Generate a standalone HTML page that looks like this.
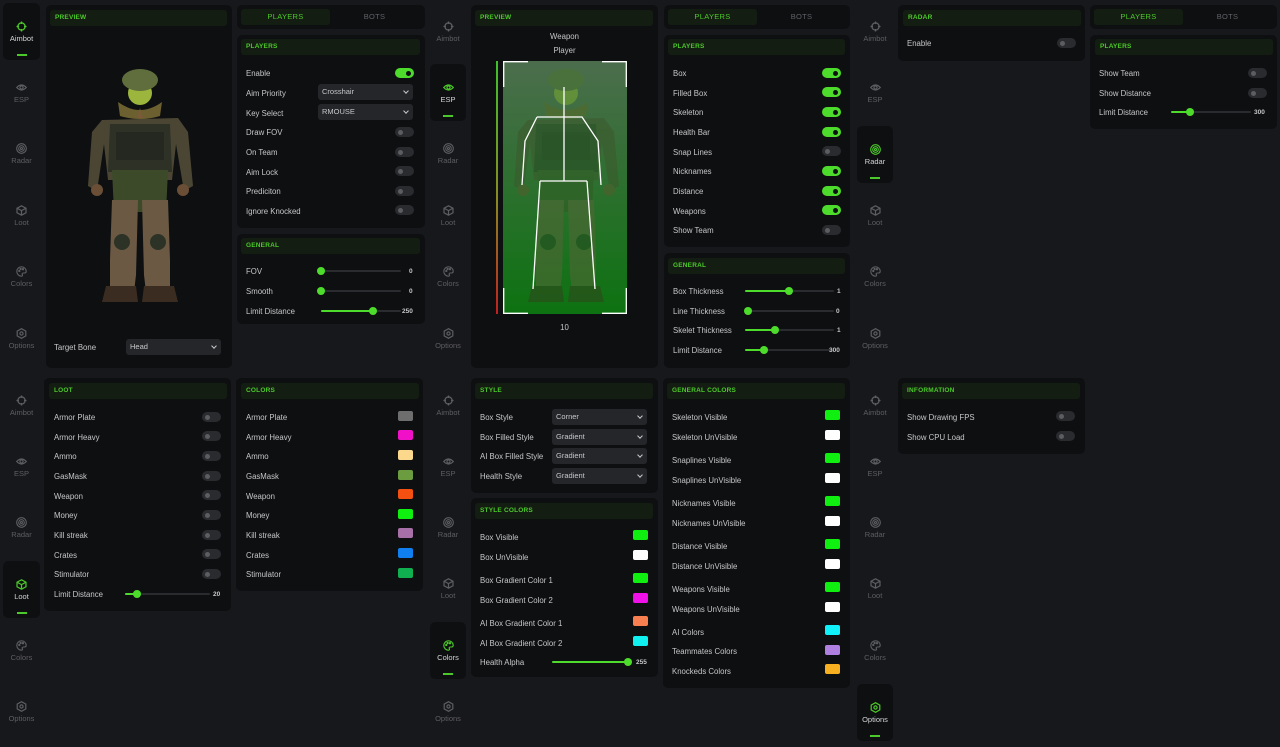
<!DOCTYPE html>
<html><head><meta charset="utf-8"><style>
*{margin:0;padding:0;box-sizing:border-box}
body{width:1280px;height:747px;background:#17181b;position:relative;overflow:hidden;font-family:"Liberation Sans",sans-serif}
.p{position:absolute;background:#0e0f11;border-radius:5px}
.h{position:absolute;background:#141d12;border-radius:3px;height:16px;color:#4cc92a;font-size:6.5px;font-weight:bold;line-height:16px;padding-left:5px;letter-spacing:.2px}
.t{position:absolute;font-size:7.8px;line-height:10px;color:#c6c7c9;white-space:nowrap;margin-top:1px}
.v{position:absolute;font-size:6.5px;line-height:10px;color:#c6c7c9;font-weight:bold;margin-top:1.5px}
.tg{position:absolute;width:19px;height:10px;border-radius:5px;background:#2a2b2f}
.tg:after{content:"";position:absolute;left:3px;top:2.5px;width:5px;height:5px;border-radius:50%;background:#5c5d61}
.tg.on{background:#4ddc2b}
.tg.on:after{left:11px;background:#0e0f11}
.sel{position:absolute;height:16px;background:#24262a;border-radius:3px;font-size:7.5px;line-height:16px;color:#c6c7c9;padding-left:4px}
.sel:after{content:"";position:absolute;right:5px;top:5px;width:3px;height:3px;border-right:1px solid #c6c7c9;border-bottom:1px solid #c6c7c9;transform:rotate(45deg)}
.sw{position:absolute;width:15px;height:10px;border-radius:2px}
.tr{position:absolute;height:2px;background:#2a2b2f;border-radius:1px}
.fl{position:absolute;left:0;top:0;height:2px;background:#4ddc2b;border-radius:1px}
.kn{position:absolute;top:-3px;width:8px;height:8px;border-radius:50%;background:#4ddc2b;margin-left:-4px}
.tabs{position:absolute;background:#0e0f11;border-radius:5px;height:24px}
.tab{position:absolute;top:4px;height:16px;width:89px;font-size:7.5px;line-height:16px;text-align:center;color:#606166;letter-spacing:.3px}
.tab.a{background:#141d12;color:#4cc92a;border-radius:3px}
.si{position:absolute;height:57px;border-radius:5px}
.si.a{background:#0e0f11}
.si svg{position:absolute;left:50%;margin-left:-5.5px;top:18px;width:11px;height:11px}
.si .l{position:absolute;left:0;right:0;top:31px;text-align:center;font-size:7.5px;line-height:10px;color:#5d5e62}
.si.a .l{color:#d3d4d6}
.si.a:after{content:"";position:absolute;left:50%;margin-left:-5px;top:51px;width:10px;height:2px;background:#4cc92a}
</style></head><body>
<svg width="0" height="0" style="position:absolute">
<defs>
<g id="i-aim" fill="none" stroke-width="1.3"><circle cx="5.5" cy="5.5" r="3.6"/><path d="M5.5 0.5v2.5M5.5 8v2.5M0.5 5.5h2.5M8 5.5h2.5"/></g>
<g id="i-esp" fill="none" stroke-width="1.2"><path d="M0.7 5.5Q5.5 0.5 10.3 5.5Q5.5 10.5 0.7 5.5Z"/><circle cx="5.5" cy="5.5" r="1.6"/></g>
<g id="i-rad" fill="none" stroke-width="1.1"><circle cx="5.5" cy="5.5" r="4.8"/><circle cx="5.5" cy="5.5" r="2.8"/><circle cx="5.5" cy="5.5" r="1"/></g>
<g id="i-loot" fill="none" stroke-width="1.2"><path d="M5.5 0.8L10 3.2V7.8L5.5 10.2L1 7.8V3.2Z M1 3.2L5.5 5.6L10 3.2 M5.5 5.6V10.2"/></g>
<g id="i-col" fill="none" stroke-width="1.1"><path d="M5.5 0.8A4.7 4.7 0 1 0 5.5 10.2C6.6 10.2 6.8 9.2 6.3 8.5C5.8 7.8 6.3 7 7.2 7H8.5A1.8 1.8 0 0 0 10.2 5.2C10.2 2.8 8.1 0.8 5.5 0.8Z"/><circle cx="3.3" cy="5" r=".6"/><circle cx="4.6" cy="3" r=".6"/><circle cx="7" cy="3.2" r=".6"/></g>
<g id="i-opt" fill="none" stroke-width="1.2"><path d="M5.5 0.7L9.8 3.1V7.9L5.5 10.3L1.2 7.9V3.1Z"/><circle cx="5.5" cy="5.5" r="1.6"/></g>
<g id="sold">
<path d="M42 60L118 58L128 72L133 126L124 131L116 84L112 120L48 120L44 84L37 131L28 126L32 72Z" fill="#4b4634"/>
<path d="M50 64H110L112 112H48Z" fill="#2e3126"/>
<path d="M56 72H104V100H56Z" fill="#252820"/>
<path d="M52 110H108L106 152H54Z" fill="#3d4a2a"/>
<path d="M52 140H78L76 215L74 232H50L50 200Z" fill="#6b5944"/>
<path d="M82 140H108L110 200L110 232H86L84 215Z" fill="#6b5944"/>
<circle cx="62" cy="182" r="8" fill="#2c3326"/><circle cx="98" cy="182" r="8" fill="#2c3326"/>
<path d="M46 226H76L78 242H42Z M84 226H114L118 242H82Z" fill="#3a2c20"/>
<circle cx="37" cy="130" r="6" fill="#6b4e36"/><circle cx="123" cy="130" r="6" fill="#6b4e36"/>
<path d="M58 42Q80 58 102 42L100 56Q80 62 60 56Z" fill="#6d6030"/>
<ellipse cx="80" cy="33" rx="12" ry="12" fill="#9cb53c"/>
<ellipse cx="80" cy="20" rx="18" ry="11" fill="#5f6e3c"/>
<path d="M80 48L77 58H83Z" fill="#7a5a38"/>
</g>
</defs></svg>

<!-- ===== SIDEBAR 1 TOP ===== -->
<div class="si a" style="left:3px;top:3px;width:37px"><svg stroke="#4cc92a"><use href="#i-aim"/></svg><div class="l">Aimbot</div></div>
<div class="si" style="left:3px;top:64px;width:37px"><svg stroke="#5d5e62"><use href="#i-esp"/></svg><div class="l">ESP</div></div>
<div class="si" style="left:3px;top:125px;width:37px"><svg stroke="#5d5e62"><use href="#i-rad"/></svg><div class="l">Radar</div></div>
<div class="si" style="left:3px;top:187px;width:37px"><svg stroke="#5d5e62"><use href="#i-loot"/></svg><div class="l">Loot</div></div>
<div class="si" style="left:3px;top:248px;width:37px"><svg stroke="#5d5e62"><use href="#i-col"/></svg><div class="l">Colors</div></div>
<div class="si" style="left:3px;top:310px;width:37px"><svg stroke="#5d5e62"><use href="#i-opt"/></svg><div class="l">Options</div></div>

<!-- Preview 1 -->
<div class="p" style="left:46px;top:5px;width:186px;height:363px"></div>
<div class="h" style="left:50px;top:10px;width:177px">PREVIEW</div>
<svg style="position:absolute;left:60px;top:60px" width="160" height="250"><use href="#sold"/></svg>
<div class="t" style="left:54px;top:342px">Target Bone</div>
<div class="sel" style="left:126px;top:339px;width:95px">Head</div>

<!-- Tabs 1 -->
<div class="tabs" style="left:237px;top:5px;width:188px"><div class="tab a" style="left:4px">PLAYERS</div><div class="tab" style="left:93px">BOTS</div></div>
<div class="p" style="left:237px;top:35px;width:188px;height:193px"></div>
<div class="h" style="left:241px;top:39px;width:179px">PLAYERS</div>
<div class="t" style="left:246px;top:68px">Enable</div><div class="tg on" style="left:395px;top:68px"></div>
<div class="t" style="left:246px;top:88px">Aim Priority</div><div class="sel" style="left:318px;top:84px;width:95px">Crosshair</div>
<div class="t" style="left:246px;top:108px">Key Select</div><div class="sel" style="left:318px;top:104px;width:95px">RMOUSE</div>
<div class="t" style="left:246px;top:127px">Draw FOV</div><div class="tg" style="left:395px;top:127px"></div>
<div class="t" style="left:246px;top:147px">On Team</div><div class="tg" style="left:395px;top:147px"></div>
<div class="t" style="left:246px;top:167px">Aim Lock</div><div class="tg" style="left:395px;top:166px"></div>
<div class="t" style="left:246px;top:186px">Prediciton</div><div class="tg" style="left:395px;top:186px"></div>
<div class="t" style="left:246px;top:206px">Ignore Knocked</div><div class="tg" style="left:395px;top:205px"></div>

<div class="p" style="left:237px;top:234px;width:188px;height:90px"></div>
<div class="h" style="left:241px;top:238px;width:179px">GENERAL</div>
<div class="t" style="left:246px;top:266px">FOV</div><div class="tr" style="left:321px;top:270px;width:80px"><div class="fl" style="width:0"></div><div class="kn" style="left:0"></div></div><div class="v" style="left:409px;top:265px">0</div>
<div class="t" style="left:246px;top:286px">Smooth</div><div class="tr" style="left:321px;top:290px;width:80px"><div class="fl" style="width:0"></div><div class="kn" style="left:0"></div></div><div class="v" style="left:409px;top:285px">0</div>
<div class="t" style="left:246px;top:306px">Limit Distance</div><div class="tr" style="left:321px;top:310px;width:80px"><div class="fl" style="width:52px"></div><div class="kn" style="left:52px"></div></div><div class="v" style="left:402px;top:305px">250</div>

<!-- ===== SIDEBAR 2 TOP ===== -->
<div class="si" style="left:430px;top:3px;width:36px"><svg stroke="#5d5e62"><use href="#i-aim"/></svg><div class="l">Aimbot</div></div>
<div class="si a" style="left:430px;top:64px;width:36px"><svg stroke="#4cc92a"><use href="#i-esp"/></svg><div class="l">ESP</div></div>
<div class="si" style="left:430px;top:125px;width:36px"><svg stroke="#5d5e62"><use href="#i-rad"/></svg><div class="l">Radar</div></div>
<div class="si" style="left:430px;top:187px;width:36px"><svg stroke="#5d5e62"><use href="#i-loot"/></svg><div class="l">Loot</div></div>
<div class="si" style="left:430px;top:248px;width:36px"><svg stroke="#5d5e62"><use href="#i-col"/></svg><div class="l">Colors</div></div>
<div class="si" style="left:430px;top:310px;width:36px"><svg stroke="#5d5e62"><use href="#i-opt"/></svg><div class="l">Options</div></div>

<!-- Preview 2 -->
<div class="p" style="left:471px;top:5px;width:187px;height:363px"></div>
<div class="h" style="left:475px;top:10px;width:178px">PREVIEW</div>
<div class="t" style="left:471px;width:187px;text-align:center;top:31px">Weapon</div>
<div class="t" style="left:471px;width:187px;text-align:center;top:45px">Player</div>
<div style="position:absolute;left:503px;top:61px;width:124px;height:253px;background:linear-gradient(#5f6360,#0b6a10)"></div>
<svg style="position:absolute;left:486px;top:60px;opacity:.55" width="160" height="250"><use href="#sold"/></svg>
<div style="position:absolute;left:503px;top:61px;width:124px;height:253px;background:rgba(20,140,20,.25)"></div>
<div style="position:absolute;left:496px;top:61px;width:2px;height:253px;background:linear-gradient(#3fc02a,#8a8a20 55%,#c02020)"></div>
<svg style="position:absolute;left:503px;top:61px" width="124" height="253" fill="none" stroke="#fff" stroke-width="1.3">
<path d="M0.7 26V0.7H25M99 0.7H123.3V26M0.7 227V252.3H25M99 252.3H123.3V227"/>
<path d="M61 26V120M34 56H79L95 80L98 124M34 56L22 80L19 124M37 120H84M37 120L30 228M84 120L92 228"/>
</svg>
<div class="t" style="left:471px;width:187px;text-align:center;top:322px">10</div>

<!-- Tabs 2 -->
<div class="tabs" style="left:664px;top:5px;width:186px"><div class="tab a" style="left:4px">PLAYERS</div><div class="tab" style="left:93px">BOTS</div></div>
<div class="p" style="left:664px;top:35px;width:186px;height:212px"></div>
<div class="h" style="left:668px;top:39px;width:177px">PLAYERS</div>
<div class="t" style="left:673px;top:68px">Box</div><div class="tg on" style="left:822px;top:68px"></div>
<div class="t" style="left:673px;top:88px">Filled Box</div><div class="tg on" style="left:822px;top:87px"></div>
<div class="t" style="left:673px;top:107px">Skeleton</div><div class="tg on" style="left:822px;top:107px"></div>
<div class="t" style="left:673px;top:127px">Health Bar</div><div class="tg on" style="left:822px;top:127px"></div>
<div class="t" style="left:673px;top:147px">Snap Lines</div><div class="tg" style="left:822px;top:146px"></div>
<div class="t" style="left:673px;top:166px">Nicknames</div><div class="tg on" style="left:822px;top:166px"></div>
<div class="t" style="left:673px;top:186px">Distance</div><div class="tg on" style="left:822px;top:186px"></div>
<div class="t" style="left:673px;top:206px">Weapons</div><div class="tg on" style="left:822px;top:205px"></div>
<div class="t" style="left:673px;top:225px">Show Team</div><div class="tg" style="left:822px;top:225px"></div>

<div class="p" style="left:664px;top:253px;width:186px;height:115px"></div>
<div class="h" style="left:668px;top:258px;width:177px">GENERAL</div>
<div class="t" style="left:673px;top:286px">Box Thickness</div><div class="tr" style="left:745px;top:290px;width:89px"><div class="fl" style="width:44px"></div><div class="kn" style="left:44px"></div></div><div class="v" style="left:837px;top:285px">1</div>
<div class="t" style="left:673px;top:306px">Line Thickness</div><div class="tr" style="left:748px;top:310px;width:86px"><div class="fl" style="width:0"></div><div class="kn" style="left:0"></div></div><div class="v" style="left:836px;top:305px">0</div>
<div class="t" style="left:673px;top:325px">Skelet Thickness</div><div class="tr" style="left:745px;top:329px;width:89px"><div class="fl" style="width:30px"></div><div class="kn" style="left:30px"></div></div><div class="v" style="left:837px;top:324px">1</div>
<div class="t" style="left:673px;top:345px">Limit Distance</div><div class="tr" style="left:745px;top:349px;width:89px"><div class="fl" style="width:19px"></div><div class="kn" style="left:19px"></div></div><div class="v" style="left:829px;top:344px">300</div>

<!-- ===== SIDEBAR 3 TOP ===== -->
<div class="si" style="left:857px;top:3px;width:36px"><svg stroke="#5d5e62"><use href="#i-aim"/></svg><div class="l">Aimbot</div></div>
<div class="si" style="left:857px;top:64px;width:36px"><svg stroke="#5d5e62"><use href="#i-esp"/></svg><div class="l">ESP</div></div>
<div class="si a" style="left:857px;top:126px;width:36px"><svg stroke="#4cc92a"><use href="#i-rad"/></svg><div class="l">Radar</div></div>
<div class="si" style="left:857px;top:187px;width:36px"><svg stroke="#5d5e62"><use href="#i-loot"/></svg><div class="l">Loot</div></div>
<div class="si" style="left:857px;top:248px;width:36px"><svg stroke="#5d5e62"><use href="#i-col"/></svg><div class="l">Colors</div></div>
<div class="si" style="left:857px;top:310px;width:36px"><svg stroke="#5d5e62"><use href="#i-opt"/></svg><div class="l">Options</div></div>

<div class="p" style="left:898px;top:5px;width:187px;height:56px"></div>
<div class="h" style="left:903px;top:10px;width:178px">RADAR</div>
<div class="t" style="left:907px;top:38px">Enable</div><div class="tg" style="left:1057px;top:38px"></div>

<div class="tabs" style="left:1090px;top:5px;width:187px"><div class="tab a" style="left:4px">PLAYERS</div><div class="tab" style="left:93px">BOTS</div></div>
<div class="p" style="left:1090px;top:35px;width:187px;height:94px"></div>
<div class="h" style="left:1095px;top:39px;width:178px">PLAYERS</div>
<div class="t" style="left:1099px;top:68px">Show Team</div><div class="tg" style="left:1248px;top:68px"></div>
<div class="t" style="left:1099px;top:88px">Show Distance</div><div class="tg" style="left:1248px;top:88px"></div>
<div class="t" style="left:1099px;top:107px">Limit Distance</div><div class="tr" style="left:1171px;top:111px;width:80px"><div class="fl" style="width:19px"></div><div class="kn" style="left:19px"></div></div><div class="v" style="left:1254px;top:106px">300</div>

<!-- ===== SIDEBAR 4 BOTTOM ===== -->
<div class="si" style="left:3px;top:377px;width:37px"><svg stroke="#5d5e62"><use href="#i-aim"/></svg><div class="l">Aimbot</div></div>
<div class="si" style="left:3px;top:438px;width:37px"><svg stroke="#5d5e62"><use href="#i-esp"/></svg><div class="l">ESP</div></div>
<div class="si" style="left:3px;top:499px;width:37px"><svg stroke="#5d5e62"><use href="#i-rad"/></svg><div class="l">Radar</div></div>
<div class="si a" style="left:3px;top:561px;width:37px"><svg stroke="#4cc92a"><use href="#i-loot"/></svg><div class="l">Loot</div></div>
<div class="si" style="left:3px;top:622px;width:37px"><svg stroke="#5d5e62"><use href="#i-col"/></svg><div class="l">Colors</div></div>
<div class="si" style="left:3px;top:683px;width:37px"><svg stroke="#5d5e62"><use href="#i-opt"/></svg><div class="l">Options</div></div>

<div class="p" style="left:44px;top:378px;width:187px;height:233px"></div>
<div class="h" style="left:49px;top:383px;width:178px">LOOT</div>
<div class="t" style="left:54px;top:412px">Armor Plate</div><div class="tg" style="left:202px;top:412px"></div>
<div class="t" style="left:54px;top:432px">Armor Heavy</div><div class="tg" style="left:202px;top:431px"></div>
<div class="t" style="left:54px;top:451px">Ammo</div><div class="tg" style="left:202px;top:451px"></div>
<div class="t" style="left:54px;top:471px">GasMask</div><div class="tg" style="left:202px;top:471px"></div>
<div class="t" style="left:54px;top:491px">Weapon</div><div class="tg" style="left:202px;top:490px"></div>
<div class="t" style="left:54px;top:510px">Money</div><div class="tg" style="left:202px;top:510px"></div>
<div class="t" style="left:54px;top:530px">Kill streak</div><div class="tg" style="left:202px;top:530px"></div>
<div class="t" style="left:54px;top:550px">Crates</div><div class="tg" style="left:202px;top:549px"></div>
<div class="t" style="left:54px;top:569px">Stimulator</div><div class="tg" style="left:202px;top:569px"></div>
<div class="t" style="left:54px;top:589px">Limit Distance</div><div class="tr" style="left:125px;top:593px;width:85px"><div class="fl" style="width:12px"></div><div class="kn" style="left:12px"></div></div><div class="v" style="left:213px;top:588px">20</div>

<div class="p" style="left:236px;top:378px;width:187px;height:213px"></div>
<div class="h" style="left:241px;top:383px;width:178px">COLORS</div>
<div class="t" style="left:246px;top:412px">Armor Plate</div><div class="sw" style="left:398px;top:411px;background:#6e6e6e"></div>
<div class="t" style="left:246px;top:432px">Armor Heavy</div><div class="sw" style="left:398px;top:430px;background:#f010c8"></div>
<div class="t" style="left:246px;top:451px">Ammo</div><div class="sw" style="left:398px;top:450px;background:#fcd88c"></div>
<div class="t" style="left:246px;top:471px">GasMask</div><div class="sw" style="left:398px;top:470px;background:#6c9c40"></div>
<div class="t" style="left:246px;top:491px">Weapon</div><div class="sw" style="left:398px;top:489px;background:#f45012"></div>
<div class="t" style="left:246px;top:510px">Money</div><div class="sw" style="left:398px;top:509px;background:#10f010"></div>
<div class="t" style="left:246px;top:530px">Kill streak</div><div class="sw" style="left:398px;top:528px;background:#a870a8"></div>
<div class="t" style="left:246px;top:550px">Crates</div><div class="sw" style="left:398px;top:548px;background:#1080f0"></div>
<div class="t" style="left:246px;top:569px">Stimulator</div><div class="sw" style="left:398px;top:568px;background:#10b050"></div>

<!-- ===== SIDEBAR 5 BOTTOM ===== -->
<div class="si" style="left:430px;top:377px;width:36px"><svg stroke="#5d5e62"><use href="#i-aim"/></svg><div class="l">Aimbot</div></div>
<div class="si" style="left:430px;top:438px;width:36px"><svg stroke="#5d5e62"><use href="#i-esp"/></svg><div class="l">ESP</div></div>
<div class="si" style="left:430px;top:499px;width:36px"><svg stroke="#5d5e62"><use href="#i-rad"/></svg><div class="l">Radar</div></div>
<div class="si" style="left:430px;top:560px;width:36px"><svg stroke="#5d5e62"><use href="#i-loot"/></svg><div class="l">Loot</div></div>
<div class="si a" style="left:430px;top:622px;width:36px"><svg stroke="#4cc92a"><use href="#i-col"/></svg><div class="l">Colors</div></div>
<div class="si" style="left:430px;top:683px;width:36px"><svg stroke="#5d5e62"><use href="#i-opt"/></svg><div class="l">Options</div></div>

<div class="p" style="left:471px;top:378px;width:187px;height:115px"></div>
<div class="h" style="left:475px;top:383px;width:178px">STYLE</div>
<div class="t" style="left:480px;top:412px">Box Style</div><div class="sel" style="left:552px;top:409px;width:95px">Corner</div>
<div class="t" style="left:480px;top:432px">Box Filled Style</div><div class="sel" style="left:552px;top:429px;width:95px">Gradient</div>
<div class="t" style="left:480px;top:451px">AI Box Filled Style</div><div class="sel" style="left:552px;top:448px;width:95px">Gradient</div>
<div class="t" style="left:480px;top:471px">Health Style</div><div class="sel" style="left:552px;top:468px;width:95px">Gradient</div>

<div class="p" style="left:471px;top:498px;width:187px;height:179px"></div>
<div class="h" style="left:475px;top:503px;width:178px">STYLE COLORS</div>
<div class="t" style="left:480px;top:532px">Box Visible</div><div class="sw" style="left:633px;top:530px;background:#10f010"></div>
<div class="t" style="left:480px;top:552px">Box UnVisible</div><div class="sw" style="left:633px;top:550px;background:#fff"></div>
<div class="t" style="left:480px;top:575px">Box Gradient Color 1</div><div class="sw" style="left:633px;top:573px;background:#10f010"></div>
<div class="t" style="left:480px;top:595px">Box Gradient Color 2</div><div class="sw" style="left:633px;top:593px;background:#f010e8"></div>
<div class="t" style="left:480px;top:618px">AI Box Gradient Color 1</div><div class="sw" style="left:633px;top:616px;background:#f88050"></div>
<div class="t" style="left:480px;top:638px">AI Box Gradient Color 2</div><div class="sw" style="left:633px;top:636px;background:#10f0f0"></div>
<div class="t" style="left:480px;top:657px">Health Alpha</div><div class="tr" style="left:552px;top:661px;width:76px"><div class="fl" style="width:76px"></div><div class="kn" style="left:76px"></div></div><div class="v" style="left:636px;top:656px">255</div>

<div class="p" style="left:663px;top:378px;width:187px;height:310px"></div>
<div class="h" style="left:667px;top:383px;width:178px">GENERAL COLORS</div>
<div class="t" style="left:672px;top:412px">Skeleton Visible</div><div class="sw" style="left:825px;top:410px;background:#10f010"></div>
<div class="t" style="left:672px;top:432px">Skeleton UnVisible</div><div class="sw" style="left:825px;top:430px;background:#fff"></div>
<div class="t" style="left:672px;top:455px">Snaplines Visible</div><div class="sw" style="left:825px;top:453px;background:#10f010"></div>
<div class="t" style="left:672px;top:475px">Snaplines UnVisible</div><div class="sw" style="left:825px;top:473px;background:#fff"></div>
<div class="t" style="left:672px;top:498px">Nicknames Visible</div><div class="sw" style="left:825px;top:496px;background:#10f010"></div>
<div class="t" style="left:672px;top:518px">Nicknames UnVisible</div><div class="sw" style="left:825px;top:516px;background:#fff"></div>
<div class="t" style="left:672px;top:541px">Distance Visible</div><div class="sw" style="left:825px;top:539px;background:#10f010"></div>
<div class="t" style="left:672px;top:561px">Distance UnVisible</div><div class="sw" style="left:825px;top:559px;background:#fff"></div>
<div class="t" style="left:672px;top:584px">Weapons Visible</div><div class="sw" style="left:825px;top:582px;background:#10f010"></div>
<div class="t" style="left:672px;top:604px">Weapons UnVisible</div><div class="sw" style="left:825px;top:602px;background:#fff"></div>
<div class="t" style="left:672px;top:627px">AI Colors</div><div class="sw" style="left:825px;top:625px;background:#10f0f8"></div>
<div class="t" style="left:672px;top:646px">Teammates Colors</div><div class="sw" style="left:825px;top:645px;background:#b080e0"></div>
<div class="t" style="left:672px;top:666px">Knockeds Colors</div><div class="sw" style="left:825px;top:664px;background:#f8b020"></div>

<!-- ===== SIDEBAR 6 BOTTOM ===== -->
<div class="si" style="left:857px;top:377px;width:36px"><svg stroke="#5d5e62"><use href="#i-aim"/></svg><div class="l">Aimbot</div></div>
<div class="si" style="left:857px;top:438px;width:36px"><svg stroke="#5d5e62"><use href="#i-esp"/></svg><div class="l">ESP</div></div>
<div class="si" style="left:857px;top:499px;width:36px"><svg stroke="#5d5e62"><use href="#i-rad"/></svg><div class="l">Radar</div></div>
<div class="si" style="left:857px;top:560px;width:36px"><svg stroke="#5d5e62"><use href="#i-loot"/></svg><div class="l">Loot</div></div>
<div class="si" style="left:857px;top:622px;width:36px"><svg stroke="#5d5e62"><use href="#i-col"/></svg><div class="l">Colors</div></div>
<div class="si a" style="left:857px;top:684px;width:36px"><svg stroke="#4cc92a"><use href="#i-opt"/></svg><div class="l">Options</div></div>

<div class="p" style="left:898px;top:378px;width:187px;height:76px"></div>
<div class="h" style="left:902px;top:383px;width:178px">INFORMATION</div>
<div class="t" style="left:907px;top:412px">Show Drawing FPS</div><div class="tg" style="left:1056px;top:411px"></div>
<div class="t" style="left:907px;top:432px">Show CPU Load</div><div class="tg" style="left:1056px;top:431px"></div>
</body></html>
